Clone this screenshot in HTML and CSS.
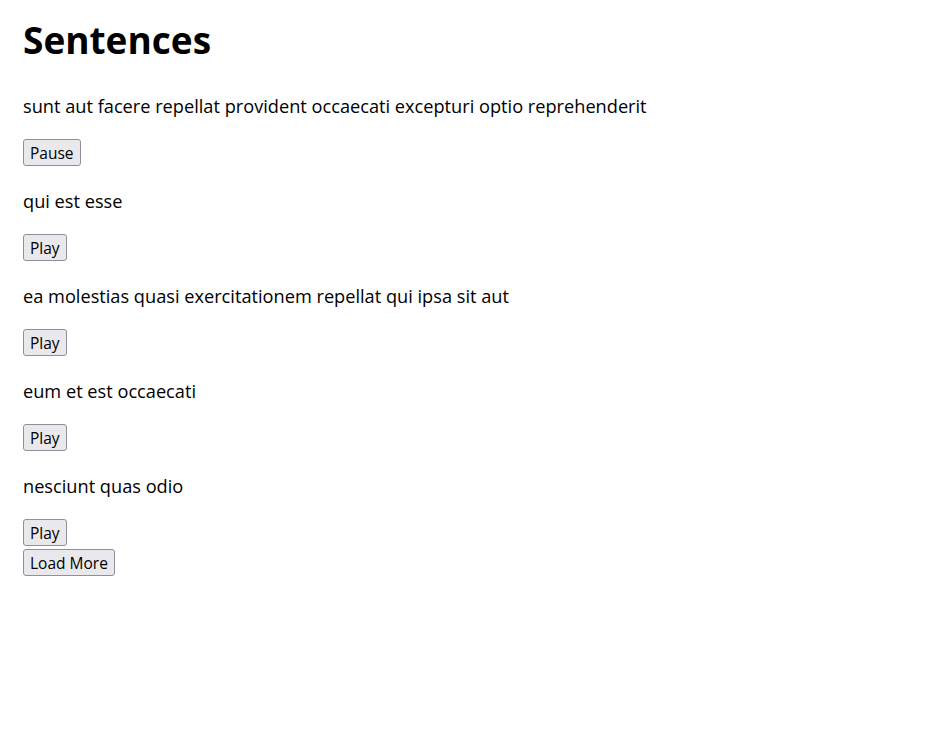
FILE: index.html
```html
<!DOCTYPE html>
<html lang="en">
<head>
<meta charset="utf-8">
<title>Sentences</title>
<link rel="stylesheet" href="styles.css">
</head>
<body>
<main class="page">
  <h1 class="title">Sentences</h1>
  <ul class="sentences">
    <li class="sentence">
      <p class="text">sunt aut facere repellat provident occaecati excepturi optio reprehenderit</p>
      <button class="btn" type="button">Pause</button>
    </li>
    <li class="sentence">
      <p class="text">qui est esse</p>
      <button class="btn" type="button">Play</button>
    </li>
    <li class="sentence">
      <p class="text">ea molestias quasi exercitationem repellat qui ipsa sit aut</p>
      <button class="btn" type="button">Play</button>
    </li>
    <li class="sentence">
      <p class="text">eum et est occaecati</p>
      <button class="btn" type="button">Play</button>
    </li>
    <li class="sentence">
      <p class="text">nesciunt quas odio</p>
      <button class="btn" type="button">Play</button>
    </li>
  </ul>
  <div class="more-row">
    <button class="btn" type="button">Load More</button>
  </div>
</main>
</body>
</html>
```

FILE: styles.css
```css
html, body {
  margin: 0;
  padding: 0;
  background: #ffffff;
}

body {
  font-family: "Open Sans", "Noto Sans", sans-serif;
  color: #000000;
}

.page {
  display: flex;
  flex-direction: column;
  align-items: flex-start;
  padding: 16px 23px;
}

.title {
  margin: 0;
  font-size: 37px;
  line-height: 48px;
  font-weight: 700;
}

.sentences {
  list-style: none;
  margin: 30px 0 0;
  padding: 0;
  display: flex;
  flex-direction: column;
  gap: 23px;
}

.sentence {
  display: flex;
  flex-direction: column;
  align-items: flex-start;
  gap: 21px;
}

.text {
  margin: 0;
  font-size: 18.2px;
  line-height: 24px;
}

.more-row {
  margin-top: 3px;
}

.btn {
  box-sizing: border-box;
  font-family: inherit;
  font-size: 15.5px;
  line-height: 20px;
  height: 27px;
  padding: 1px 6px;
  color: #000000;
  background: #e9e9ed;
  border: 1px solid #8f8f9d;
  border-radius: 3px;
}
```
